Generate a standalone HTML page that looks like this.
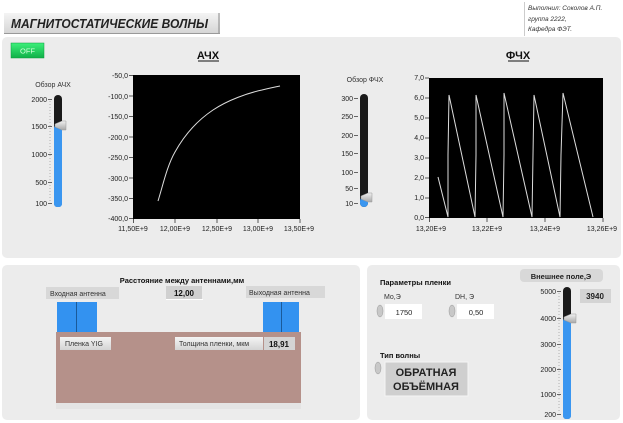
<!DOCTYPE html>
<html><head><meta charset="utf-8"><style>
html,body{margin:0;padding:0;background:#fff;}
svg{display:block;}
text{font-family:"Liberation Sans","DejaVu Sans",sans-serif;}
</style></head><body>
<svg width="623" height="423" viewBox="0 0 623 423" xmlns="http://www.w3.org/2000/svg">
<defs>
<linearGradient id="btn" x1="0" y1="0" x2="0" y2="1"><stop offset="0" stop-color="#f4f4f4"/><stop offset="1" stop-color="#d4d4d4"/></linearGradient>
<linearGradient id="grn" x1="0" y1="0" x2="0" y2="1"><stop offset="0" stop-color="#3cf07a"/><stop offset="1" stop-color="#10b048"/></linearGradient>
<linearGradient id="th" x1="0" y1="0" x2="0" y2="1"><stop offset="0" stop-color="#f0f0f0"/><stop offset="1" stop-color="#a8a8a8"/></linearGradient>
</defs>
<!-- title -->
<rect x="4" y="13" width="216" height="21" fill="url(#btn)"/>
<line x1="219" y1="13" x2="219" y2="34" stroke="#888"/>
<line x1="4" y1="33.5" x2="220" y2="33.5" stroke="#999"/>
<text x="11" y="28" font-size="13" font-style="italic" font-weight="bold" fill="#222" textLength="197" lengthAdjust="spacingAndGlyphs">МАГНИТОСТАТИЧЕСКИЕ ВОЛНЫ</text>
<!-- credit -->
<rect x="524" y="1" width="99" height="34" fill="#fff"/>
<line x1="524.5" y1="2" x2="524.5" y2="36" stroke="#ccc"/>
<g font-size="6.5" font-style="italic" fill="#333">
<text x="528" y="10">Выполнил: Соколов А.П.</text>
<text x="528" y="21">группа 2222,</text>
<text x="528" y="31">Кафедра ФЭТ.</text>
</g>
<!-- top panel -->
<rect x="2" y="37" width="619" height="221" rx="5" fill="#ececec"/>
<rect x="11" y="43" width="33" height="15" fill="url(#grn)" stroke="#0b9a3c" stroke-width="0.5"/>
<text x="20" y="53.5" font-size="7.5" fill="#d0ffd8">OFF</text>
<text x="208" y="59" font-size="11" font-weight="bold" fill="#111" text-anchor="middle">АЧХ</text>
<line x1="198" y1="61" x2="219" y2="61" stroke="#111"/>
<text x="518" y="59" font-size="11" font-weight="bold" fill="#111" text-anchor="middle">ФЧХ</text>
<line x1="508" y1="61" x2="529" y2="61" stroke="#111"/>
<!-- slider 1 -->
<text x="53" y="87" font-size="7" fill="#333" text-anchor="middle">Обзор АЧХ</text>
<rect x="54" y="95" width="8" height="112" rx="4" fill="#1a1a1a"/>
<rect x="54" y="125" width="8" height="82" rx="3" fill="#3a96f0"/>
<path d="M55 124 L62 121 L66 121 L66 130 L62 130 L55 127 Z" fill="url(#th)" stroke="#999" stroke-width="0.5"/>
<g font-size="7" fill="#222" text-anchor="end">
<text x="47" y="102">2000</text><text x="47" y="129">1500</text><text x="47" y="157">1000</text><text x="47" y="185">500</text><text x="47" y="206">100</text>
</g>
<g stroke="#444" stroke-width="0.8">
<line x1="48" y1="99.5" x2="52" y2="99.5"/><line x1="48" y1="126.5" x2="52" y2="126.5"/><line x1="48" y1="154.5" x2="52" y2="154.5"/><line x1="48" y1="182.5" x2="52" y2="182.5"/><line x1="48" y1="203.5" x2="52" y2="203.5"/>
</g>
<g stroke="#666" stroke-width="0.6" stroke-dasharray="0.8 2.2"><line x1="50" y1="101" x2="50" y2="202"/></g>
<!-- plot 1 -->
<rect x="133" y="75" width="167" height="144" fill="#000"/>
<g font-size="7" fill="#222" text-anchor="end">
<text x="128" y="78">-50,0</text><text x="128" y="99">-100,0</text><text x="128" y="119">-150,0</text><text x="128" y="140">-200,0</text><text x="128" y="160">-250,0</text><text x="128" y="181">-300,0</text><text x="128" y="201">-350,0</text><text x="128" y="221">-400,0</text>
</g>
<g stroke="#333" stroke-width="0.8">
<line x1="129" y1="75.5" x2="133" y2="75.5"/><line x1="129" y1="96" x2="133" y2="96"/><line x1="129" y1="116.5" x2="133" y2="116.5"/><line x1="129" y1="137" x2="133" y2="137"/><line x1="129" y1="157.5" x2="133" y2="157.5"/><line x1="129" y1="178" x2="133" y2="178"/><line x1="129" y1="198.5" x2="133" y2="198.5"/><line x1="129" y1="218.5" x2="133" y2="218.5"/>
<line x1="133.5" y1="219" x2="133.5" y2="223"/><line x1="175" y1="219" x2="175" y2="223"/><line x1="217" y1="219" x2="217" y2="223"/><line x1="258" y1="219" x2="258" y2="223"/><line x1="300" y1="219" x2="300" y2="223"/>
</g>
<g font-size="7" fill="#222" text-anchor="middle">
<text x="133" y="231">11,50E+9</text><text x="175" y="231">12,00E+9</text><text x="217" y="231">12,50E+9</text><text x="258" y="231">13,00E+9</text><text x="299" y="231">13,50E+9</text>
</g>
<path d="M158 201 C163 185 167 166 175 152 C185 134 198 120 213 110 C228 100 248 93 262 90 C270 88 275 87 280 86" fill="none" stroke="#ddd" stroke-width="1"/>
<!-- slider 2 -->
<text x="365" y="82" font-size="7" fill="#333" text-anchor="middle">Обзор ФЧХ</text>
<rect x="360" y="94" width="8" height="113" rx="4" fill="#1a1a1a"/>
<rect x="360" y="197" width="8" height="10" rx="4" fill="#3a96f0"/>
<path d="M361 196 L368 193 L372 193 L372 202 L368 202 L361 199 Z" fill="url(#th)" stroke="#999" stroke-width="0.5"/>
<g font-size="7" fill="#222" text-anchor="end">
<text x="353" y="101">300</text><text x="353" y="119">250</text><text x="353" y="138">200</text><text x="353" y="156">150</text><text x="353" y="175">100</text><text x="353" y="191">50</text><text x="353" y="206">10</text>
</g>
<g stroke="#444" stroke-width="0.8">
<line x1="354" y1="98.5" x2="358" y2="98.5"/><line x1="354" y1="116.5" x2="358" y2="116.5"/><line x1="354" y1="135.5" x2="358" y2="135.5"/><line x1="354" y1="153.5" x2="358" y2="153.5"/><line x1="354" y1="172.5" x2="358" y2="172.5"/><line x1="354" y1="188.5" x2="358" y2="188.5"/><line x1="354" y1="203.5" x2="358" y2="203.5"/>
</g>
<!-- plot 2 -->
<rect x="429" y="78" width="174" height="140" fill="#000"/>
<g font-size="7" fill="#222" text-anchor="end">
<text x="424" y="80">7,0</text><text x="424" y="100">6,0</text><text x="424" y="120">5,0</text><text x="424" y="140">4,0</text><text x="424" y="160">3,0</text><text x="424" y="180">2,0</text><text x="424" y="200">1,0</text><text x="424" y="220">0,0</text>
</g>
<g stroke="#333" stroke-width="0.8">
<line x1="425" y1="78" x2="429" y2="78"/><line x1="425" y1="98" x2="429" y2="98"/><line x1="425" y1="118" x2="429" y2="118"/><line x1="425" y1="138" x2="429" y2="138"/><line x1="425" y1="158" x2="429" y2="158"/><line x1="425" y1="178" x2="429" y2="178"/><line x1="425" y1="198" x2="429" y2="198"/><line x1="425" y1="217.5" x2="429" y2="217.5"/>
<line x1="429.5" y1="218" x2="429.5" y2="222"/><line x1="487" y1="218" x2="487" y2="222"/><line x1="545" y1="218" x2="545" y2="222"/><line x1="603" y1="218" x2="603" y2="222"/>
</g>
<g font-size="7" fill="#222" text-anchor="middle">
<text x="431" y="231">13,20E+9</text><text x="487" y="231">13,22E+9</text><text x="545" y="231">13,24E+9</text><text x="602" y="231">13,26E+9</text>
</g>
<path d="M438 177 L448 217 L448 155 L449 95 L475 217 L476 155 L476 95 L503 217 L504 155 L504 93 L532 217 L533 155 L534 95 L560 217 L561 155 L563 93 L593 217" fill="none" stroke="#ddd" stroke-width="1"/>
<!-- bottom left panel -->
<rect x="2" y="265" width="358" height="155" rx="5" fill="#ececec"/>
<text x="182" y="283" font-size="7.5" font-weight="bold" fill="#111" text-anchor="middle">Расстояние между антеннами,мм</text>
<rect x="46" y="287" width="73" height="12" fill="#d8d8d8"/>
<text x="50" y="296" font-size="7" fill="#333">Входная антенна</text>
<rect x="166" y="286" width="36" height="13" fill="#d0d0d0"/>
<line x1="166" y1="299.5" x2="203" y2="299.5" stroke="#fff"/>
<text x="184" y="296" font-size="8" font-weight="bold" fill="#111" text-anchor="middle">12,00</text>
<rect x="246" y="286" width="79" height="12" fill="#d8d8d8"/>
<text x="249" y="295" font-size="7" fill="#333">Выходная антенна</text>
<rect x="57" y="302" width="40" height="30" fill="#3392f0"/>
<line x1="76.5" y1="302" x2="76.5" y2="332" stroke="#1a5a9a"/>
<rect x="263" y="302" width="36" height="30" fill="#3392f0"/>
<line x1="281.5" y1="302" x2="281.5" y2="332" stroke="#1a5a9a"/>
<rect x="56" y="332" width="245" height="71" fill="#b5918a"/>
<rect x="56" y="403" width="245" height="6" fill="#e4e4e4"/>
<rect x="60" y="337" width="51" height="13" fill="url(#btn)"/>
<text x="65" y="346" font-size="7" fill="#333">Пленка YIG</text>
<rect x="175" y="337" width="88" height="13" fill="url(#btn)"/>
<text x="179" y="346" font-size="7" fill="#333">Толщина пленки, мкм</text>
<rect x="264" y="337" width="31" height="13" fill="#d4d4d4"/>
<text x="279" y="347" font-size="8" font-weight="bold" fill="#111" text-anchor="middle">18,91</text>
<!-- bottom right panel -->
<rect x="367" y="265" width="253" height="155" rx="5" fill="#ececec"/>
<text x="380" y="285" font-size="7.5" font-weight="bold" fill="#111">Параметры пленки</text>
<text x="384" y="299" font-size="7" fill="#333">Мо,Э</text>
<text x="455" y="299" font-size="7" fill="#333">DH, Э</text>
<ellipse cx="380" cy="311" rx="3" ry="6" fill="#c8c8c8" stroke="#999" stroke-width="0.5"/>
<rect x="385" y="304" width="37" height="15" fill="#fff"/>
<text x="404" y="315" font-size="7.5" fill="#222" text-anchor="middle">1750</text>
<ellipse cx="452" cy="311" rx="3" ry="6" fill="#c8c8c8" stroke="#999" stroke-width="0.5"/>
<rect x="457" y="304" width="37" height="15" fill="#fff"/>
<text x="476" y="315" font-size="7.5" fill="#222" text-anchor="middle">0,50</text>
<text x="380" y="358" font-size="7.5" font-weight="bold" fill="#111">Тип волны</text>
<ellipse cx="378" cy="368" rx="3" ry="6" fill="#c8c8c8" stroke="#999" stroke-width="0.5"/>
<rect x="385" y="362" width="83" height="34" fill="#cfcfcf" stroke="#f4f4f4"/>
<text x="426" y="376" font-size="11" font-weight="bold" fill="#222" text-anchor="middle">ОБРАТНАЯ</text>
<text x="426" y="390" font-size="11" font-weight="bold" fill="#222" text-anchor="middle">ОБЪЁМНАЯ</text>
<rect x="520" y="269" width="83" height="13" rx="4" fill="#d8d8d8"/>
<text x="561" y="279" font-size="7.5" font-weight="bold" fill="#222" text-anchor="middle">Внешнее поле,Э</text>
<rect x="563" y="287" width="8" height="132" rx="4" fill="#1a1a1a"/>
<rect x="563" y="318" width="8" height="101" rx="3" fill="#3a96f0"/>
<path d="M564 317 L571 314 L576 314 L576 323 L571 323 L564 320 Z" fill="url(#th)" stroke="#999" stroke-width="0.5"/>
<rect x="580" y="289" width="31" height="14" fill="#d4d4d4"/>
<text x="595" y="299" font-size="8" font-weight="bold" fill="#222" text-anchor="middle">3940</text>
<g font-size="7" fill="#222" text-anchor="end">
<text x="556" y="294">5000</text><text x="556" y="321">4000</text><text x="556" y="347">3000</text><text x="556" y="372">2000</text><text x="556" y="397">1000</text><text x="556" y="417">200</text>
</g>
<g stroke="#444" stroke-width="0.8">
<line x1="557" y1="291.5" x2="561" y2="291.5"/><line x1="557" y1="318.5" x2="561" y2="318.5"/><line x1="557" y1="344.5" x2="561" y2="344.5"/><line x1="557" y1="369.5" x2="561" y2="369.5"/><line x1="557" y1="394.5" x2="561" y2="394.5"/><line x1="557" y1="414.5" x2="561" y2="414.5"/>
</g>
<g stroke="#666" stroke-width="0.6" stroke-dasharray="0.8 2.2"><line x1="559" y1="293" x2="559" y2="413"/></g>
</svg>
</body></html>
